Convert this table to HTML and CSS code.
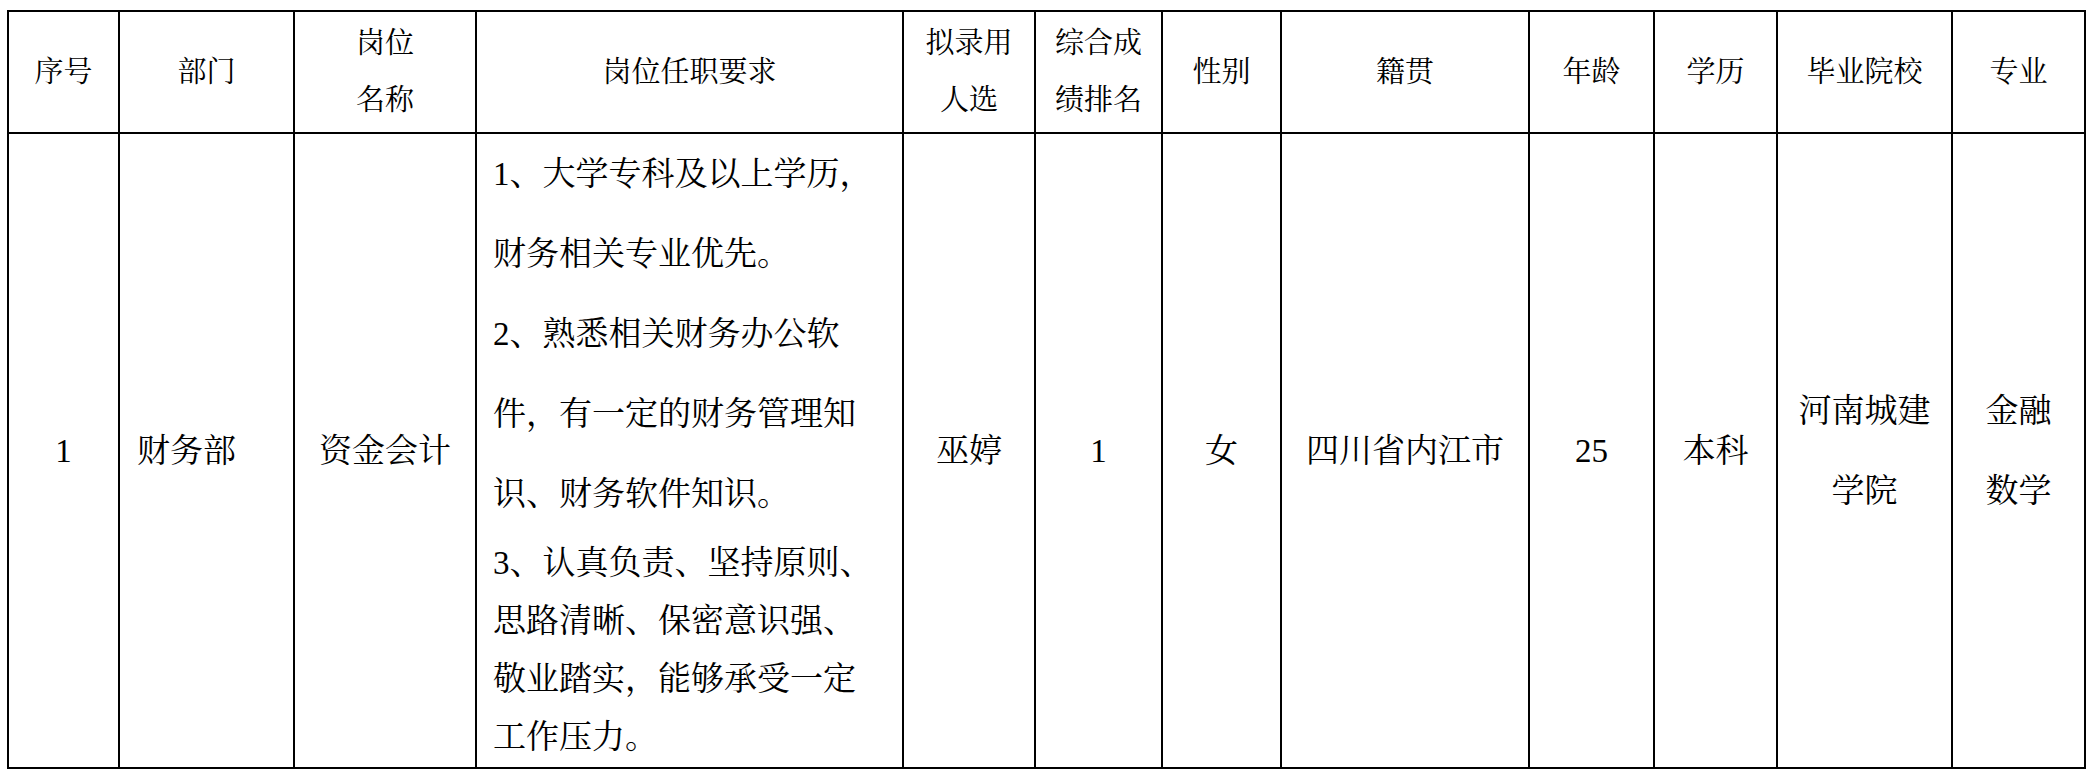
FILE: index.html
```html
<!DOCTYPE html>
<html lang="zh-CN">
<head>
<meta charset="utf-8">
<title>岗位拟录用人选</title>
<link rel="stylesheet" href="styles.css">
</head>
<body>
<div class="sheet" role="table">
  <div class="cell head">序号</div>
  <div class="cell head">部门</div>
  <div class="cell head">岗位<br>名称</div>
  <div class="cell head">岗位任职要求</div>
  <div class="cell head">拟录用<br>人选</div>
  <div class="cell head">综合成<br>绩排名</div>
  <div class="cell head">性别</div>
  <div class="cell head">籍贯</div>
  <div class="cell head">年龄</div>
  <div class="cell head">学历</div>
  <div class="cell head">毕业院校</div>
  <div class="cell head">专业</div>

  <div class="cell body">1</div>
  <div class="cell body left">财务部</div>
  <div class="cell body">资金会计</div>
  <div class="cell body req">
    <p class="para loose">1、大学专科及以上学历，<br>财务相关专业优先。</p>
    <p class="para loose">2、熟悉相关财务办公软<br>件，有一定的财务管理知<br>识、财务软件知识。</p>
    <p class="para tight">3、认真负责、坚持原则、<br>思路清晰、保密意识强、<br>敬业踏实，能够承受一定<br>工作压力。</p>
  </div>
  <div class="cell body">巫婷</div>
  <div class="cell body">1</div>
  <div class="cell body">女</div>
  <div class="cell body">四川省内江市</div>
  <div class="cell body">25</div>
  <div class="cell body">本科</div>
  <div class="cell body">河南城建<br>学院</div>
  <div class="cell body">金融<br>数学</div>
</div>
</body>
</html>
```

FILE: styles.css
```css
html, body {
  margin: 0;
  padding: 0;
  background: #ffffff;
}

body {
  padding: 10px 0 0 7px;
  font-family: "Liberation Serif", "Noto Serif CJK SC", "Noto Sans CJK SC", serif;
  color: #000000;
}

.sheet {
  display: grid;
  grid-template-columns: 109px 173px 180px 425px 130px 125px 117px 246px 123px 121px 173px 131px;
  grid-template-rows: 120px 633px;
  gap: 2px;
  padding: 2px;
  background: #000000;
  width: max-content;
}

.cell {
  background: #ffffff;
  display: flex;
  align-items: center;
  justify-content: center;
  text-align: center;
}

.head {
  font-size: 29px;
  line-height: 57px;
}

.body {
  font-size: 33px;
  line-height: 80px;
}

.left {
  justify-content: flex-start;
  text-align: left;
  padding-left: 17px;
}

.req {
  display: block;
  text-align: left;
  padding-left: 16px;
}

.para {
  margin: 0;
}

.loose {
  line-height: 80px;
}

.tight {
  line-height: 58px;
}
```
